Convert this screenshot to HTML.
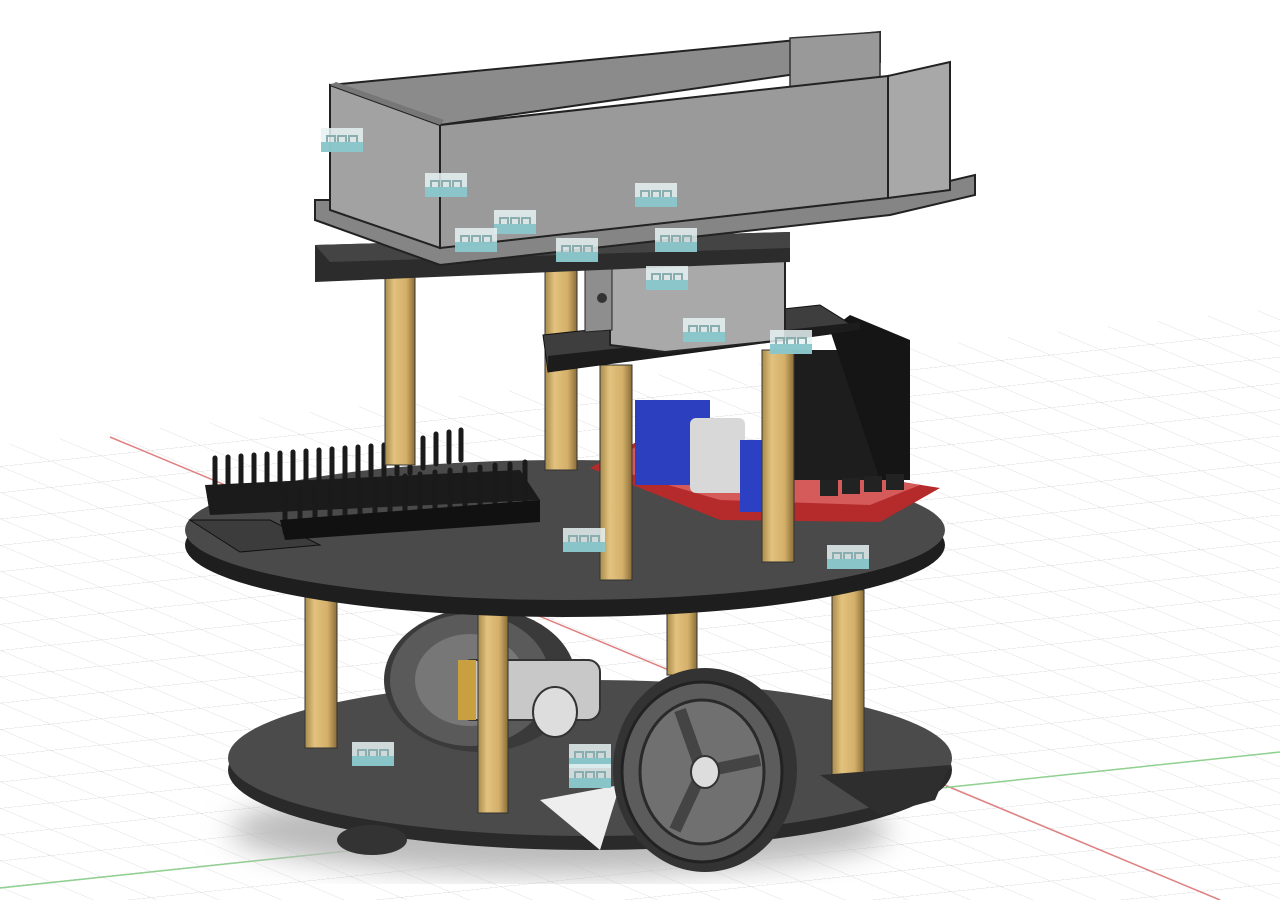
<!DOCTYPE html>
<html><head><meta charset="utf-8"><style>
html,body{margin:0;padding:0;background:#fff;width:1280px;height:900px;overflow:hidden}
svg{display:block}
</style></head><body>
<svg width="1280" height="900" viewBox="0 0 1280 900" xmlns="http://www.w3.org/2000/svg">
<defs>
<pattern id="g" width="10" height="10" patternUnits="userSpaceOnUse" patternTransform="matrix(5,2.1,5,-0.53,0,440)">
<path d="M0 0H10M0 0V10" stroke="#cfcfcf" stroke-width="0.25" fill="none"/>
</pattern>
<clipPath id="gc"><polygon points="0,445 1280,308 1280,900 0,900"/></clipPath>
<filter id="bl"><feGaussianBlur stdDeviation="14"/></filter>
<linearGradient id="post" x1="0" x2="1"><stop offset="0" stop-color="#a88a4a"/><stop offset="0.3" stop-color="#e2c27e"/><stop offset="0.7" stop-color="#d4b06a"/><stop offset="1" stop-color="#8a6e38"/></linearGradient>
<g id="icon"><rect x="0" y="0" width="42" height="24" fill="#e8f2f3" opacity="0.85"/><rect x="0" y="14" width="42" height="10" fill="#7cc0c4" opacity="0.85"/><path d="M6 14v-6h8v6M17 14v-6h8v6M28 14v-6h8v6" stroke="#8aaeb0" fill="none" stroke-width="2"/></g>
</defs>
<rect width="1280" height="900" fill="#fff"/>
<g clip-path="url(#gc)"><rect width="1280" height="900" fill="url(#g)"/></g>
<line x1="110" y1="437" x2="1220" y2="900" stroke="#e08080" stroke-width="1.5"/>
<line x1="0" y1="888" x2="1280" y2="752" stroke="#90d090" stroke-width="1.5"/>
<ellipse cx="560" cy="830" rx="330" ry="45" fill="#bbb" filter="url(#bl)"/>

<!-- bottom disc -->
<ellipse cx="590" cy="770" rx="362" ry="80" fill="#2a2a2a"/>
<ellipse cx="590" cy="758" rx="362" ry="78" fill="#4b4b4b"/>
<polygon points="540,800 620,785 600,850" fill="#eee"/>
<ellipse cx="372" cy="840" rx="35" ry="15" fill="#333"/>

<!-- rear wheel -->
<ellipse cx="480" cy="680" rx="96" ry="72" fill="#3a3a3a"/>
<ellipse cx="470" cy="680" rx="80" ry="66" fill="#5a5a5a"/>
<ellipse cx="470" cy="680" rx="55" ry="46" fill="#777"/>
<rect x="460" y="660" width="140" height="60" rx="12" fill="#c8c8c8" stroke="#333" stroke-width="2"/>
<ellipse cx="555" cy="712" rx="22" ry="25" fill="#ddd" stroke="#333" stroke-width="2"/>
<rect x="458" y="660" width="18" height="60" fill="#c9a040"/>

<!-- posts lower -->
<rect x="305" y="590" width="32" height="158" fill="url(#post)" stroke="#333"/>
<rect x="478" y="605" width="30" height="208" fill="url(#post)" stroke="#333"/>
<rect x="667" y="605" width="30" height="70" fill="url(#post)" stroke="#333"/>
<rect x="832" y="590" width="32" height="185" fill="url(#post)" stroke="#333"/>

<!-- front wheel -->
<ellipse cx="705" cy="770" rx="92" ry="102" fill="#333"/>
<ellipse cx="702" cy="772" rx="80" ry="90" fill="#5c5c5c" stroke="#222" stroke-width="3"/>
<ellipse cx="702" cy="772" rx="62" ry="72" fill="#707070" stroke="#2a2a2a" stroke-width="3"/>
<path d="M702 772L680 710M702 772L760 760M702 772L675 830" stroke="#444" stroke-width="12"/>
<ellipse cx="705" cy="772" rx="14" ry="16" fill="#ddd" stroke="#333" stroke-width="2"/>
<polygon points="820,775 950,765 935,800 880,815" fill="#2e2e2e"/>

<!-- middle disc -->
<ellipse cx="565" cy="545" rx="380" ry="72" fill="#1e1e1e"/>
<ellipse cx="565" cy="530" rx="380" ry="70" fill="#4a4a4a"/>
<polygon points="190,520 270,520 320,545 240,552" fill="#3c3c3c" stroke="#111"/>

<!-- pin headers -->
<polygon points="205,485 520,470 540,500 210,515" fill="#1b1b1b"/>
<g stroke="#1a1a1a" stroke-width="5" stroke-linecap="round">
<path d="M215 458v30M228 457v30M241 456v30M254 455v30M267 454v30M280 453v30M293 452v30M306 451v30M319 450v30M332 449v30M345 448v30M358 447v30M371 446v30M384 445v30M397 444v30M410 443v30M423 438v30M436 434v30M449 432v30M461 430v30"/>
<path d="M285 492v40M300 490v40M315 488v40M330 486v40M345 484v40M360 482v40M375 480v40M390 478v40M405 476v40M420 474v40M435 472v40M450 470v40M465 468v40M480 467v40M495 465v40M510 464v40M525 462v40"/>
</g>
<polygon points="280,520 540,500 540,522 285,540" fill="#111"/>

<!-- motor driver -->
<polygon points="590,468 640,440 940,488 880,522 720,520" fill="#b52a2a"/>
<polygon points="600,465 640,445 920,485 870,505 720,500" fill="#d55a5a"/>
<rect x="635" y="400" width="75" height="85" fill="#2b3fbf"/>
<rect x="690" y="418" width="55" height="75" rx="6" fill="#d8d8d8"/>
<rect x="740" y="440" width="40" height="72" fill="#2b40c2"/>
<rect x="790" y="350" width="120" height="130" fill="#1d1d1d"/>
<path d="M830 330l20-15 60 25v140h-30z" fill="#151515"/>
<g fill="#222"><rect x="820" y="480" width="18" height="16"/><rect x="842" y="478" width="18" height="16"/><rect x="864" y="476" width="18" height="16"/><rect x="886" y="474" width="18" height="16"/></g>

<!-- posts upper -->
<rect x="385" y="275" width="30" height="190" fill="url(#post)" stroke="#333"/>
<rect x="545" y="258" width="32" height="212" fill="url(#post)" stroke="#333"/>
<rect x="600" y="365" width="32" height="215" fill="url(#post)" stroke="#333"/>
<rect x="762" y="350" width="32" height="212" fill="url(#post)" stroke="#333"/>

<!-- small plate -->
<polygon points="543,335 820,305 860,330 548,372" fill="#3e3e3e" stroke="#111"/>
<polygon points="548,356 860,322 860,330 548,372" fill="#1c1c1c"/>
<polygon points="610,262 770,243 785,255 785,340 665,352 610,345" fill="#a9a9a9" stroke="#222" stroke-width="2"/>
<polygon points="585,268 612,262 612,330 585,332" fill="#8e8e8e" stroke="#222"/>
<circle cx="602" cy="298" r="5" fill="#333"/>

<!-- top plate -->
<polygon points="315,245 790,232 790,262 315,282" fill="#2c2c2c"/>
<polygon points="315,245 790,232 790,248 330,262" fill="#444"/>

<!-- tray -->
<polygon points="315,200 330,200 440,245 890,195 975,175 975,195 890,215 440,265 315,220" fill="#858585" stroke="#222" stroke-width="2"/>
<polygon points="330,85 880,32 880,62 440,125" fill="#8b8b8b" stroke="#222" stroke-width="2"/>
<polygon points="790,38 880,32 880,80 790,88" fill="#999" stroke="#333" stroke-width="1.5"/>
<polygon points="330,85 440,125 440,248 330,210" fill="#a2a2a2" stroke="#222" stroke-width="2"/>
<polygon points="440,125 888,76 888,198 440,248" fill="#9a9a9a" stroke="#222" stroke-width="2"/>
<polygon points="888,76 950,62 950,190 888,198" fill="#a8a8a8" stroke="#222" stroke-width="2"/>
<polygon points="330,85 440,125 444,120 336,82" fill="#777"/>

<!-- icons -->
<use href="#icon" x="321" y="128"/>
<use href="#icon" x="425" y="173"/>
<use href="#icon" x="635" y="183"/>
<use href="#icon" x="494" y="210"/>
<use href="#icon" x="455" y="228"/>
<use href="#icon" x="556" y="238"/>
<use href="#icon" x="655" y="228"/>
<use href="#icon" x="646" y="266"/>
<use href="#icon" x="683" y="318"/>
<use href="#icon" x="770" y="330"/>
<use href="#icon" x="563" y="528"/>
<use href="#icon" x="827" y="545"/>
<use href="#icon" x="352" y="742"/>
<use href="#icon" x="569" y="744"/>
<use href="#icon" x="569" y="764"/>
</svg>
</body></html>
